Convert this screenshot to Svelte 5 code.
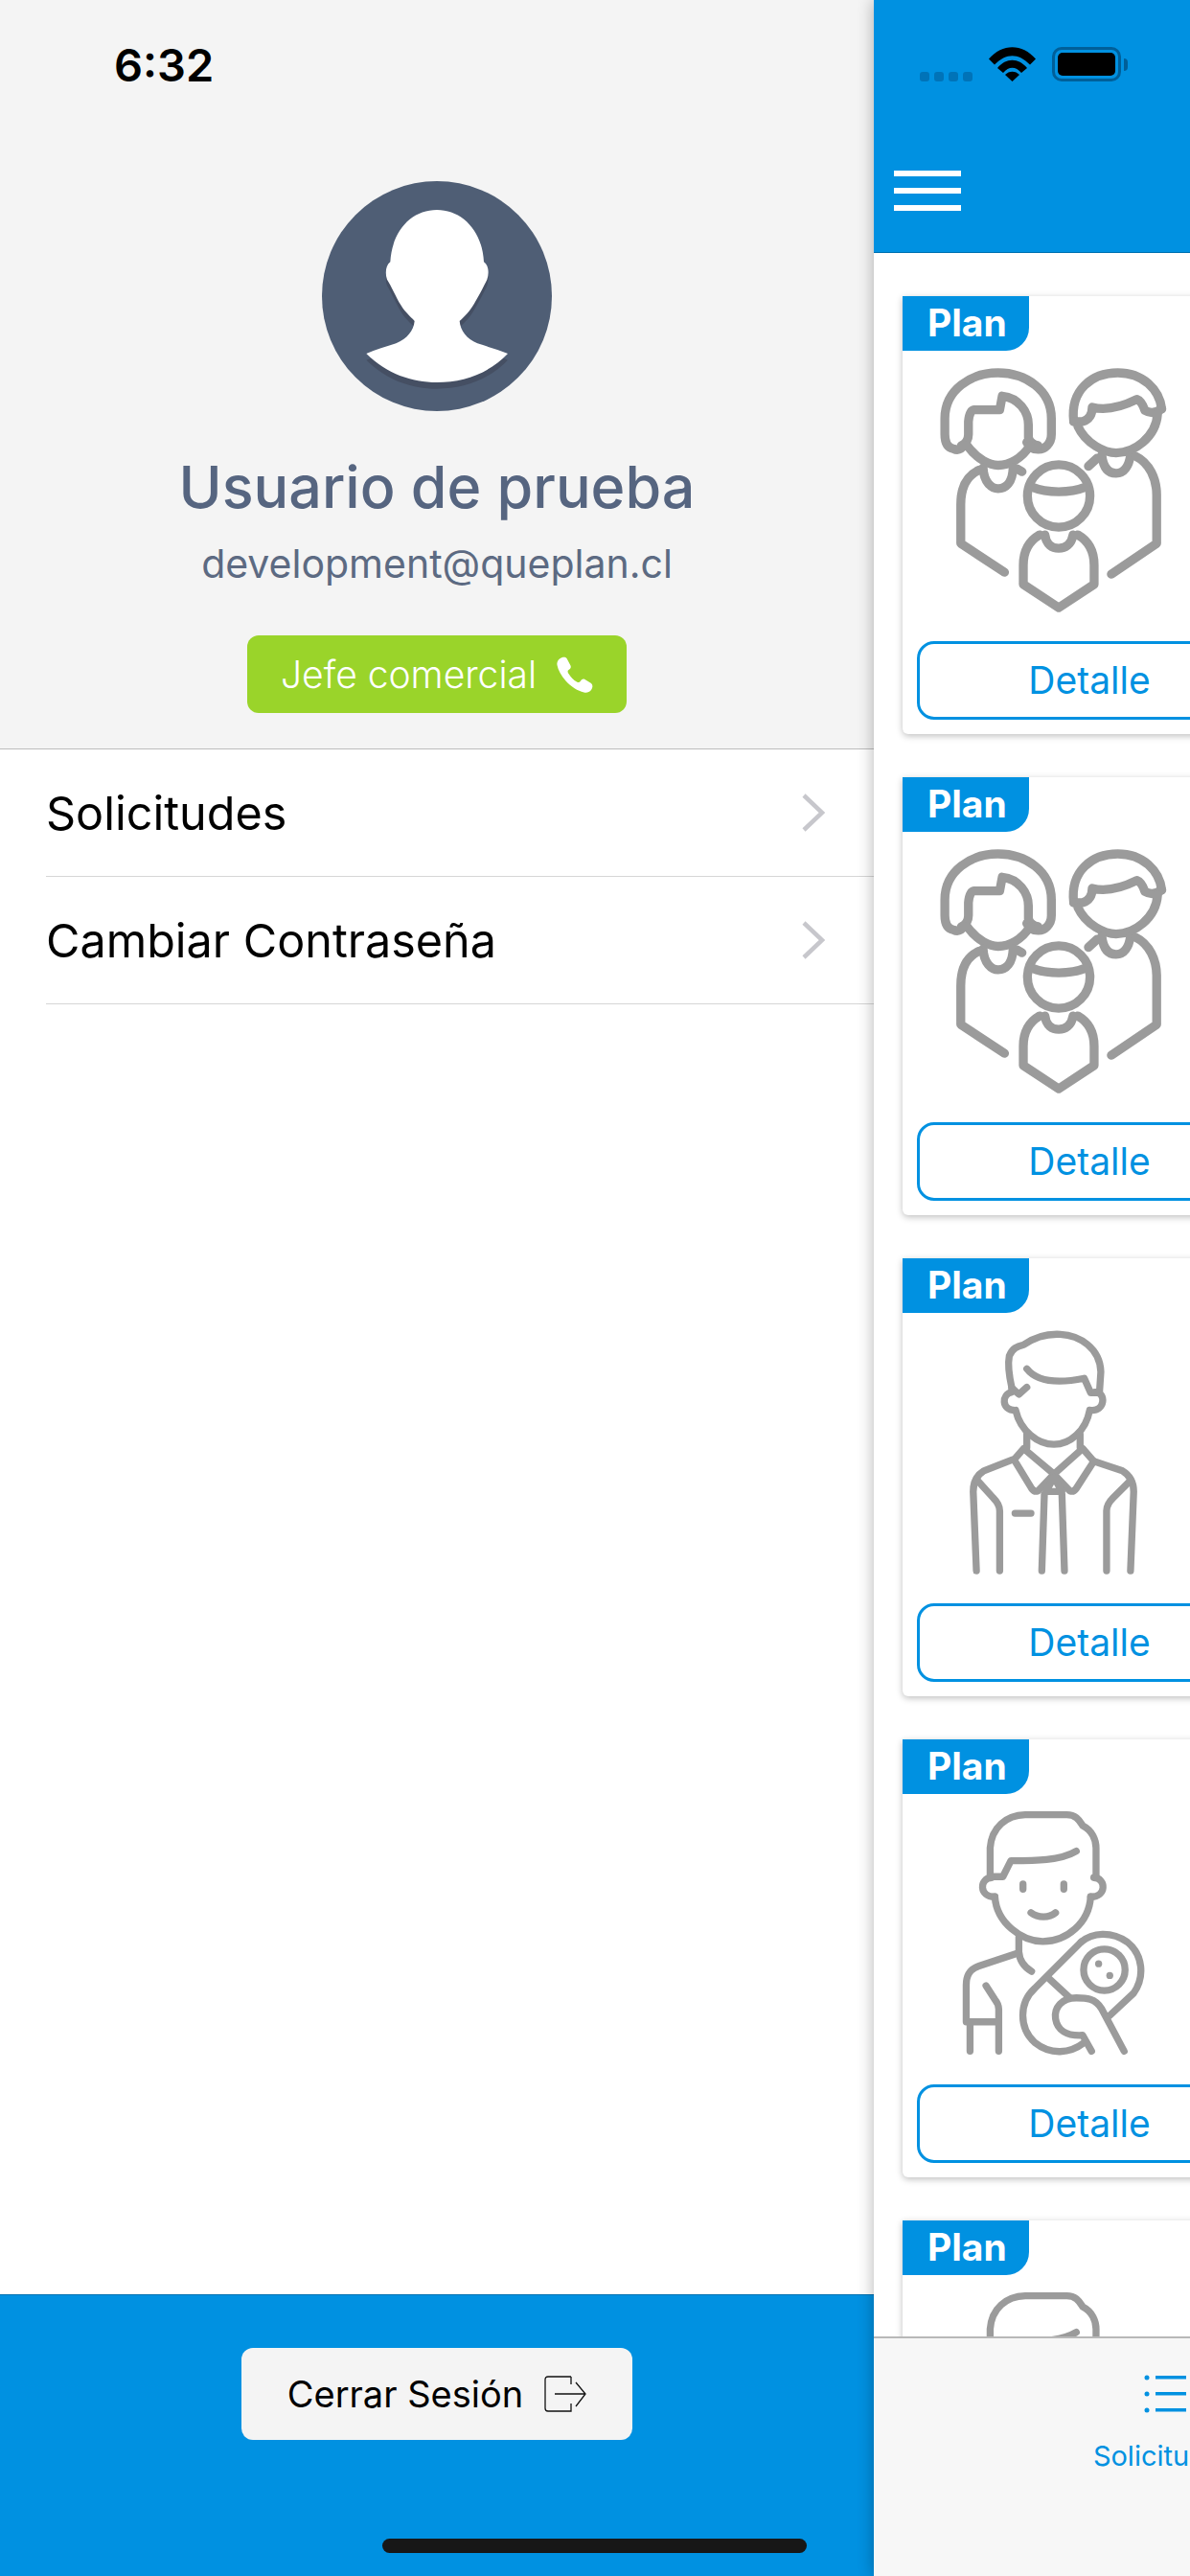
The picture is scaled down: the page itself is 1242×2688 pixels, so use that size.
<script>
	const plans = ["family", "family", "man", "dad", "dad"];
	const boxes = { family: "66 228 900 910", man: "66 210 900 910", dad: "66 216 900 910" };
	const silhouette =
		"M408 147C330 147 268 210 262 310C248 320 245 345 252 365C265 385 280 420 295 445C310 470 325 480 338 495C335 525 315 550 280 565C250 575 215 585 187 597C250 660 330 687 408 687C490 687 570 660 630 597C600 585 565 575 535 565C500 550 482 525 479 495C495 480 510 465 525 440C540 415 555 385 565 365C572 345 570 320 555 310C550 210 485 147 408 147Z";
</script>

<div class="screen">
	<aside class="drawer">
		<header class="profile">
			<div class="clock">6:32</div>
			<svg class="avatar" viewBox="48 57 720 720">
				<circle cx="408" cy="417" r="360" fill="#4f5e75" />
				<path d={silhouette} fill="#454f63" transform="translate(0 20)" />
				<path d={silhouette} fill="#fff" />
			</svg>
			<h1>Usuario de prueba</h1>
			<p class="email">development@queplan.cl</p>
			<div class="chip">
				<span>Jefe comercial</span>
				<svg viewBox="0 0 38 38" width="38" height="38">
					<path
						d="M3 2.500C5.500 .5 9 0 10.500 2L14.500 9.500C15.500 11.500 14 13 12.500 14C11 15 11.500 16.500 12.500 18C15 22 17.500 24.500 21 26.500C22.800 27.500 24 27 25 25.500C26 24 27.500 23 29.500 24L36 28C38 29.500 37.800 32.500 36 35C34 37.500 31.500 38 28.500 37.500C22 36 15 31.500 9.500 25.500C4.500 20 1.500 14 .5 9C0 6.500 1 4 3 2.500Z"
						fill="#fff"
					/>
				</svg>
			</div>
		</header>

		<nav class="menu">
			{#each ["Solicitudes", "Cambiar Contraseña"] as item}
				<div class="row">
					<span>{item}</span>
					<svg viewBox="0 0 24 40" width="24" height="40">
						<path d="M2 2L21 20L2 38" fill="none" stroke="#c7c7cc" stroke-width="4.500" />
					</svg>
				</div>
			{/each}
		</nav>

		<footer class="logout">
			<div class="logout-btn">
				<span>Cerrar Sesión</span>
				<svg viewBox="0 0 44 38" width="44" height="38" fill="none" stroke="#111" stroke-width="1.300">
					<path d="M28 1H4Q1 1 1 4V34Q1 37 4 37H28V29" />
					<path d="M28 1V9M11 19H42M33 7L43 19L33 32" />
				</svg>
			</div>
			<div class="home-bar"></div>
		</footer>
	</aside>

	<section class="panel">
		<header class="topbar">
			<div class="status">
				<div class="signal"><i></i><i></i><i></i><i></i></div>
				<svg viewBox="0 0 49 36" width="49" height="36">
					<path d="M0 12.500C14 -4 35 -4 49 12.500L43 18.500C31 6 18 6 6 18.500Z" fill="#000" />
					<path d="M9 22C18 11 31 11 40 22L34 27C28 20 21 20 15 27Z" fill="#000" />
					<path d="M17 29C21 24.500 28 24.500 32 29L24.500 36Z" fill="#000" />
				</svg>
				<div class="battery"><b></b></div>
				<div class="nub"></div>
			</div>
			<div class="burger"><i></i><i></i><i></i></div>
		</header>

		<main class="plans">
			{#each plans as kind}
				<article class="card">
					<div class="tag">Plan</div>
					<svg class="art" viewBox={boxes[kind]}>
						{#if kind === "family"}
							<g stroke-width="28">
								<path d="M262 520Q245 545 225 535Q198 530 198 490V440C198 350 280 297 365 297C450 297 532 350 532 440V490C532 520 510 538 490 537Q465 537 455 515" />
								<path d="M250 525Q272 515 272 490V450Q275 415 290 413H370L378 370C430 375 460 420 460 460V500Q465 520 490 525" />
								<path d="M268 525C300 570 340 587 365 587C400 587 440 565 465 525" />
								<path d="M318 595C320 640 345 660 365 660C390 660 410 640 412 595M425 598L440 607" />
								<path d="M305 602C265 620 248 660 248 710V832L385 922" />
								<path d="M602 450C590 350 660 297 740 297C820 297 870 350 878 410" />
								<path d="M602 450H630Q660 440 660 405Q720 420 800 380Q815 385 825 415Q850 430 878 410" />
								<path d="M615 465C640 520 700 548 735 548C790 548 860 500 865 425" />
								<path d="M690 555C695 600 715 612 735 612C760 612 775 590 780 555M675 565L648 590" />
								<path d="M795 558C840 580 862 630 862 680V832L720 928" />
								<circle cx="555" cy="683" r="98" />
								<path d="M470 655C520 675 590 675 640 655" />
								<path d="M512 805C515 835 535 847 555 847C575 847 595 835 600 805" />
								<path d="M495 805C460 825 444 860 444 900V960L555 1033L666 960V900C666 860 650 825 615 805" />
							</g>
						{:else if kind === "man"}
							<g stroke-width="22">
								<path d="M408 445C398 400 395 370 400 345C410 320 425 315 445 310C480 285 520 275 560 277C620 280 685 320 687 395L683 455" />
								<path d="M455 385C490 430 560 430 635 415L655 460H683M408 445L430 465L455 443" />
								<path d="M408 458C375 465 375 515 418 515M670 458C705 460 700 520 655 515" />
								<path d="M420 515C435 580 490 622 540 622C590 622 640 580 652 515" />
								<path d="M455 590V632M622 590V632" />
								<path d="M445 635L540 715L490 768Q478 772 470 760L415 670Z" />
								<path d="M630 635L540 715L590 768Q602 772 610 760L665 675Z" />
								<path d="M540 725L515 770H565ZM510 778L502 1018M565 778L573 1018" />
								<path d="M410 670L320 705C295 720 287 745 287 770L297 1018M665 675L755 705C780 720 790 745 790 770L780 1018" />
								<path d="M300 735L350 790Q370 810 370 830V1018M780 735L725 790Q705 810 705 830V1018" />
								<path d="M418 838H468" />
							</g>
						{:else}
							<g stroke-width="22">
								<path d="M340 470V385C345 320 390 283 450 281H580C610 281 620 300 630 315C660 330 672 360 672 385V470" />
								<path d="M345 475H380L405 425C480 425 560 425 610 395" />
								<path d="M345 478C305 480 305 540 355 538M665 478C705 480 705 540 655 538" />
								<path d="M355 538C360 620 440 678 505 678C580 678 650 620 655 538" />
								<path d="M443 498V514M571 498V514M468 588C490 605 525 605 545 588" />
								<path d="M430 665V710C432 740 450 760 470 772" />
								<path d="M425 715L305 755C275 765 265 785 265 815V930H365M327 817L355 860Q367 875 367 890V1022M277 935V1022" />
								<path d="M625 680L480 825C430 870 430 950 480 995C530 1035 590 1030 635 995" />
								<path d="M625 680C660 650 720 645 770 680C820 720 825 790 790 840L715 910" />
								<circle cx="698" cy="767" r="65" />
								<path d="M525 795L590 855" />
								<path d="M760 1022L690 890C670 855 640 855 610 855C565 855 540 885 545 920C550 955 580 975 630 972L658 1022" />
							</g>
							<circle cx="680" cy="748" r="11" class="dot" />
							<circle cx="715" cy="785" r="11" class="dot" />
						{/if}
					</svg>
					<div class="detail">Detalle</div>
				</article>
			{/each}
		</main>

		<footer class="tabs">
			<div class="tab">
				<svg viewBox="0 0 44 40" width="44" height="40">
					<g fill="#0091e1">
						<circle cx="3" cy="3" r="2.500" /><circle cx="3" cy="20" r="2.500" /><circle cx="3" cy="37" r="2.500" />
						<rect x="12" y="1" width="32" height="3.500" /><rect x="12" y="18" width="32" height="3.500" /><rect x="12" y="35" width="32" height="3.500" />
					</g>
				</svg>
				<span>Solicitudes</span>
			</div>
		</footer>
	</section>
</div>

<style>
	:global(body) {
		margin: 0;
		font-family: Inter, "Liberation Sans", sans-serif;
	}

	.screen {
		display: flex;
		width: 1242px;
		height: 2688px;
		overflow: hidden;
		background: #fff;
	}

	.drawer {
		display: flex;
		flex-direction: column;
		flex: 0 0 912px;
		height: 2688px;
	}

	.profile {
		display: flex;
		flex-direction: column;
		align-items: center;
		height: 781px;
		background: #f4f4f4;
		border-bottom: 1px solid #bcbcbc;
	}

	.clock {
		align-self: flex-start;
		height: 189px;
		box-sizing: border-box;
		padding: 40px 0 0 119px;
		font-size: 47px;
		line-height: 56px;
		font-weight: 600;
		color: #000;
	}

	.avatar {
		width: 240px;
		height: 240px;
	}

	h1 {
		margin: 42px 0 0;
		font-size: 61px;
		line-height: 74px;
		font-weight: 500;
		color: #566580;
	}

	.email {
		margin: 17px 0 0;
		font-size: 41px;
		line-height: 52px;
		font-weight: 400;
		color: #5c6a82;
	}

	.chip {
		display: flex;
		align-items: center;
		justify-content: center;
		gap: 21px;
		width: 396px;
		height: 81px;
		margin-top: 49px;
		border-radius: 12px;
		background: #9ad42a;
		color: #fff;
		font-size: 39px;
		font-weight: 300;
	}

	.menu {
		flex: 1;
		padding-left: 48px;
	}

	.row {
		display: flex;
		align-items: center;
		justify-content: space-between;
		height: 132px;
		padding-right: 51px;
		border-bottom: 1px solid #d6d6d6;
		font-size: 48.500px;
		color: #000;
	}

	.logout {
		position: relative;
		display: flex;
		justify-content: center;
		height: 294px;
		box-sizing: border-box;
		padding-top: 55px;
		background: #0091e1;
		border-top: 1px solid #0071b0;
	}

	.logout-btn {
		display: flex;
		align-items: center;
		justify-content: center;
		gap: 22px;
		width: 408px;
		height: 96px;
		border-radius: 12px;
		background: #f4f4f4;
		font-size: 38px;
		color: #000;
	}

	.home-bar {
		position: absolute;
		left: 399px;
		top: 254px;
		width: 443px;
		height: 15px;
		border-radius: 8px;
		background: #171717;
	}

	.panel {
		position: relative;
		z-index: 1;
		display: flex;
		flex-direction: column;
		flex: 0 0 330px;
		height: 2688px;
		overflow: hidden;
		background: #fff;
		box-shadow: 0 0 16px rgba(0, 0, 0, 0.3);
	}

	.topbar {
		flex: none;
		height: 264px;
		box-sizing: border-box;
		background: #0091e1;
		border-bottom: 1px solid #0071b0;
	}

	.status {
		display: flex;
		align-items: center;
		height: 36px;
		padding: 49px 0 0 48px;
	}

	.signal {
		display: flex;
		gap: 5px;
		align-self: flex-end;
		margin-right: 17px;
	}

	.signal i {
		width: 10px;
		height: 10px;
		border-radius: 3px;
		background: #0073b8;
	}

	.battery {
		box-sizing: border-box;
		width: 72px;
		height: 36px;
		margin-left: 17px;
		padding: 3px;
		border: 3px solid #005f99;
		border-radius: 10px;
	}

	.battery b {
		display: block;
		height: 100%;
		border-radius: 5px;
		background: #000;
	}

	.nub {
		width: 4px;
		height: 13px;
		margin-left: 3px;
		border-radius: 0 4px 4px 0;
		background: #005f99;
	}

	.burger {
		display: flex;
		flex-direction: column;
		gap: 12px;
		width: 70px;
		margin: 93px 0 0 21px;
	}

	.burger i {
		height: 6px;
		background: #fff;
	}

	.plans {
		flex: 1;
		min-height: 0;
		overflow: hidden;
		padding: 45px 0 0 30px;
	}

	.card {
		display: flex;
		flex-direction: column;
		box-sizing: border-box;
		width: 390px;
		height: 457px;
		margin-bottom: 45px;
		border-radius: 0 0 6px 6px;
		background: #fff;
		box-shadow: 0 2px 7px rgba(0, 0, 0, 0.26);
	}

	.tag {
		box-sizing: border-box;
		width: 132px;
		height: 57px;
		padding-left: 26px;
		border-radius: 0 0 24px 0;
		background: #0091e1;
		color: #fff;
		font-size: 39px;
		line-height: 56px;
		font-weight: 700;
	}

	.art {
		flex: none;
		width: 300px;
		height: 303px;
		fill: none;
		stroke: #9b9b9b;
		stroke-linecap: round;
		stroke-linejoin: round;
	}

	.art .dot {
		fill: #9b9b9b;
		stroke: none;
	}

	.detail {
		box-sizing: border-box;
		width: 360px;
		height: 82px;
		margin-left: 15px;
		border: 3px solid #0091e1;
		border-radius: 18px;
		color: #0091e1;
		font-size: 39px;
		line-height: 76px;
		text-align: center;
	}

	.tabs {
		flex: none;
		display: flex;
		height: 250px;
		box-sizing: border-box;
		padding: 38px 0 0 229px;
		background: #f7f7f7;
		border-top: 2px solid #b8b8b8;
	}

	.tab {
		display: flex;
		flex-direction: column;
		align-items: center;
		flex: none;
		gap: 27px;
		width: 150px;
		color: #0091e1;
		font-size: 29px;
	}
</style>
